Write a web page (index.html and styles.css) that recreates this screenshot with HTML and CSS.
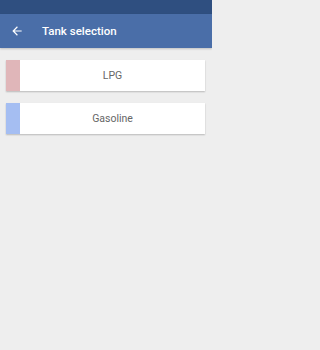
FILE: index.html
```html
<!DOCTYPE html>
<html>
<head>
<meta charset="utf-8">
<link rel="stylesheet" href="styles.css">
</head>
<body>
<div class="statusbar"></div>
<header class="toolbar">
  <svg class="back" viewBox="0 0 24 24"><path d="M20 11H7.83l5.59-5.59L12 4l-8 8 8 8 1.41-1.41L7.83 13H20v-2z" fill="#fff"/></svg>
  <span class="title">Tank selection</span>
</header>
<main class="list">
  <div class="card"><div class="strip lpg"></div><div class="label">LPG</div></div>
  <div class="card"><div class="strip gas"></div><div class="label">Gasoline</div></div>
</main>
</body>
</html>
```
FILE: styles.css
```css
html, body { margin: 0; padding: 0; }
html { background: #eeeeee; }
body { background: #eeeeee; font-family: Roboto, "Liberation Sans", sans-serif; width: 212px; height: 350px; }
.statusbar { height: 14px; background: #2f4f80; }
.toolbar { height: 34px; background: #4a6ea8; display: flex; align-items: center; color: #fff; box-shadow: 0 1px 2px rgba(0,0,0,0.2); }
.back { margin-left: 10px; width: 14px; height: 14px; flex: none; }
.title { margin-left: 18px; font-size: 11.5px; font-weight: 500; }
.list { padding: 12px 7px 0 6px; display: flex; flex-direction: column; gap: 12px; }
.card { display: flex; height: 31px; background: #fff; box-shadow: 0 1px 1.5px rgba(0,0,0,0.22); }
.strip { width: 14px; }
.lpg { background: #e0b6b9; }
.gas { background: #a5bef2; }
.label { flex: 1; display: flex; align-items: center; justify-content: center; font-size: 10.5px; color: #666; }
```
